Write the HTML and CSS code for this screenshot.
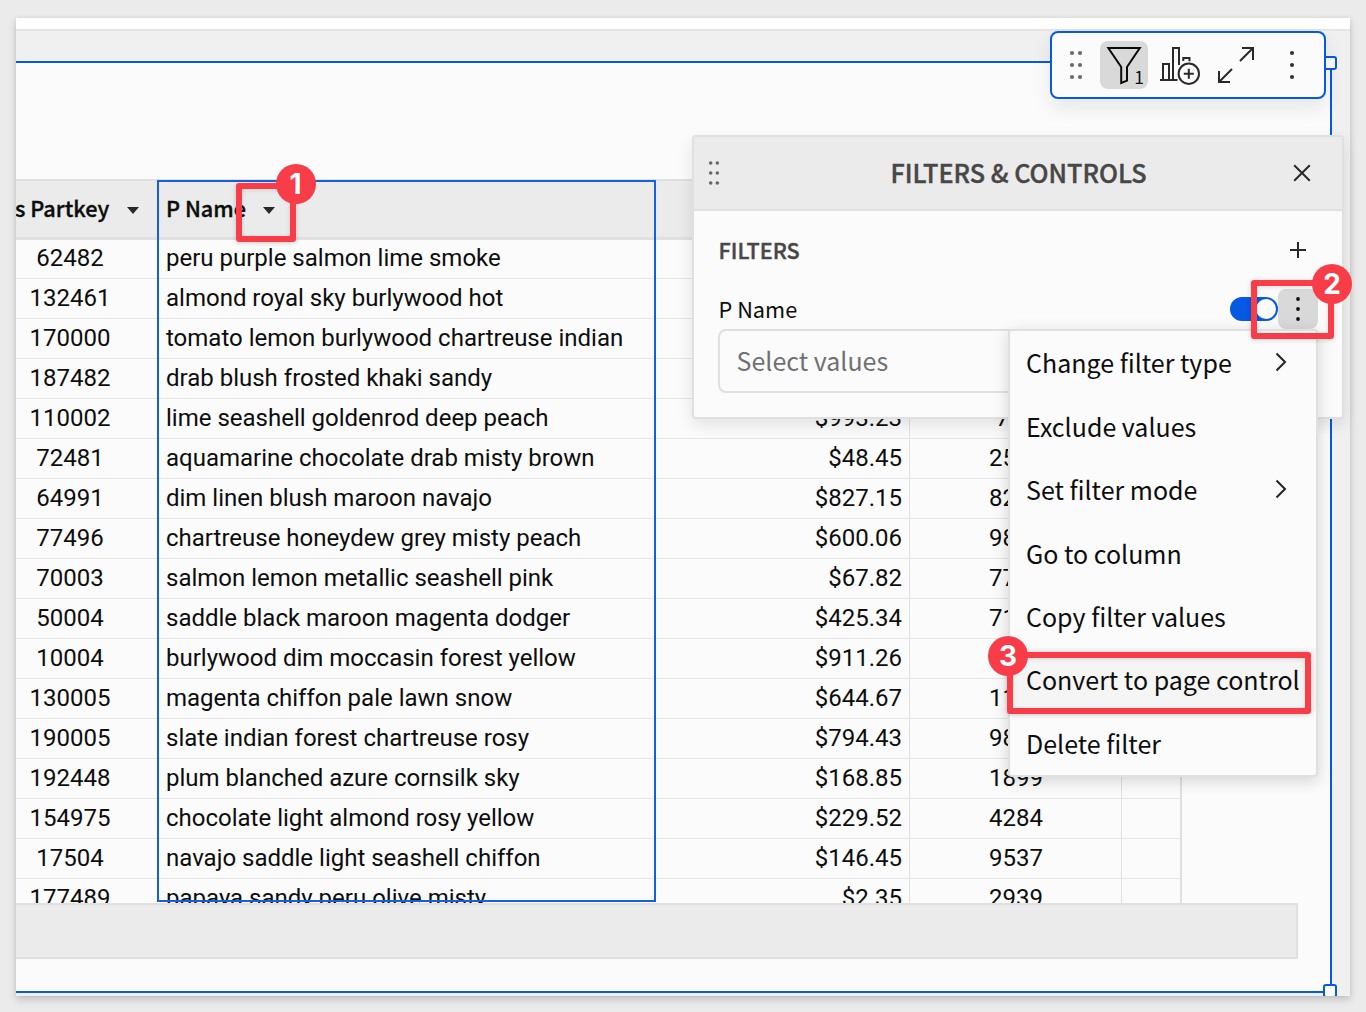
FILE: index.html
```html
<!DOCTYPE html>
<html lang="en">
<head>
<meta charset="utf-8">
<title>Filters &amp; Controls</title>
<link rel="stylesheet" href="styles.css">
</head>
<body>
<main class="window">
  <div class="topbar"></div>
  <section class="canvas">
    <div class="element">
      <div class="grid">
        <div class="row head">
          <div class="cell key"><span>s Partkey</span><i class="caret"></i></div>
          <div class="cell name"><span>P Name</span><i class="caret"></i></div>
          <div class="cell price"></div><div class="cell qty"></div><div class="cell rest"></div>
        </div>
        <div class="row"><div class="cell key">62482</div><div class="cell name">peru purple salmon lime smoke</div><div class="cell price"></div><div class="cell qty"></div><div class="cell rest"></div></div>
        <div class="row"><div class="cell key">132461</div><div class="cell name">almond royal sky burlywood hot</div><div class="cell price"></div><div class="cell qty"></div><div class="cell rest"></div></div>
        <div class="row"><div class="cell key">170000</div><div class="cell name">tomato lemon burlywood chartreuse indian</div><div class="cell price"></div><div class="cell qty"></div><div class="cell rest"></div></div>
        <div class="row"><div class="cell key">187482</div><div class="cell name">drab blush frosted khaki sandy</div><div class="cell price"></div><div class="cell qty"></div><div class="cell rest"></div></div>
        <div class="row"><div class="cell key">110002</div><div class="cell name">lime seashell goldenrod deep peach</div><div class="cell price">$993.23</div><div class="cell qty">761</div><div class="cell rest"></div></div>
        <div class="row"><div class="cell key">72481</div><div class="cell name">aquamarine chocolate drab misty brown</div><div class="cell price">$48.45</div><div class="cell qty">2510</div><div class="cell rest"></div></div>
        <div class="row"><div class="cell key">64991</div><div class="cell name">dim linen blush maroon navajo</div><div class="cell price">$827.15</div><div class="cell qty">8210</div><div class="cell rest"></div></div>
        <div class="row"><div class="cell key">77496</div><div class="cell name">chartreuse honeydew grey misty peach</div><div class="cell price">$600.06</div><div class="cell qty">9810</div><div class="cell rest"></div></div>
        <div class="row"><div class="cell key">70003</div><div class="cell name">salmon lemon metallic seashell pink</div><div class="cell price">$67.82</div><div class="cell qty">7710</div><div class="cell rest"></div></div>
        <div class="row"><div class="cell key">50004</div><div class="cell name">saddle black maroon magenta dodger</div><div class="cell price">$425.34</div><div class="cell qty">7110</div><div class="cell rest"></div></div>
        <div class="row"><div class="cell key">10004</div><div class="cell name">burlywood dim moccasin forest yellow</div><div class="cell price">$911.26</div><div class="cell qty"></div><div class="cell rest"></div></div>
        <div class="row"><div class="cell key">130005</div><div class="cell name">magenta chiffon pale lawn snow</div><div class="cell price">$644.67</div><div class="cell qty">1110</div><div class="cell rest"></div></div>
        <div class="row"><div class="cell key">190005</div><div class="cell name">slate indian forest chartreuse rosy</div><div class="cell price">$794.43</div><div class="cell qty">9810</div><div class="cell rest"></div></div>
        <div class="row"><div class="cell key">192448</div><div class="cell name">plum blanched azure cornsilk sky</div><div class="cell price">$168.85</div><div class="cell qty">1899</div><div class="cell rest"></div></div>
        <div class="row"><div class="cell key">154975</div><div class="cell name">chocolate light almond rosy yellow</div><div class="cell price">$229.52</div><div class="cell qty">4284</div><div class="cell rest"></div></div>
        <div class="row"><div class="cell key">17504</div><div class="cell name">navajo saddle light seashell chiffon</div><div class="cell price">$146.45</div><div class="cell qty">9537</div><div class="cell rest"></div></div>
        <div class="row"><div class="cell key">177489</div><div class="cell name">papaya sandy peru olive misty</div><div class="cell price">$2.35</div><div class="cell qty">2939</div><div class="cell rest"></div></div>
        <div class="column-selection"></div>
      </div>
      <div class="footer"></div>
    </div>
    <i class="handle top"></i>
    <i class="handle bottom"></i>
  </section>
</main>

<div class="toolbar">
  <svg class="icon" width="48" height="48" viewBox="0 0 48 48" fill="#6b6b6b"><circle cx="20" cy="12" r="2.1"/><circle cx="28" cy="12" r="2.1"/><circle cx="20" cy="24" r="2.1"/><circle cx="28" cy="24" r="2.1"/><circle cx="20" cy="36" r="2.1"/><circle cx="28" cy="36" r="2.1"/></svg>
  <button class="tool active"><svg width="48" height="48" viewBox="0 0 48 48" fill="none" stroke="#0a0a0a" stroke-width="2"><path d="M8.3 7H39.8L27 26V39.6L21.2 42V26Z"/></svg><span class="count">1</span></button>
  <svg class="icon chart" width="48" height="48" viewBox="0 0 48 48" fill="none" stroke="#292929" stroke-width="2"><path d="M4 39H21.5M7 39V23H13V39M17 39V7H23V24M27.3 20V17H33.5V20.3"/><circle cx="32.8" cy="32.7" r="10.2"/><path d="M27.8 32.7H37.8M32.8 27.7V37.7"/></svg>
  <svg class="icon" width="48" height="48" viewBox="0 0 48 48" fill="none" stroke="#292929" stroke-width="2"><path d="M30 7H41V19M40.5 7.5L28 20M7 30V41H18M7.5 40.5L20 28"/></svg>
  <svg class="icon more" width="48" height="48" viewBox="0 0 48 48" fill="#333"><circle cx="24" cy="12" r="2.1"/><circle cx="24" cy="24" r="2.1"/><circle cx="24" cy="36" r="2.1"/></svg>
</div>

<aside class="panel">
  <header class="panel-head">
    <svg width="12" height="26" viewBox="0 0 12 26" fill="#666"><circle cx="2.7" cy="3" r="1.8"/><circle cx="9.3" cy="3" r="1.8"/><circle cx="2.7" cy="13" r="1.8"/><circle cx="9.3" cy="13" r="1.8"/><circle cx="2.7" cy="23" r="1.8"/><circle cx="9.3" cy="23" r="1.8"/></svg>
    <h2>FILTERS &amp; CONTROLS</h2>
    <svg width="18" height="18" viewBox="0 0 18 18" fill="none" stroke="#292929" stroke-width="2"><path d="M1.2 1.2L16.8 16.8M16.8 1.2L1.2 16.8"/></svg>
  </header>
  <div class="panel-body">
    <div class="line section"><h3>FILTERS</h3><svg width="16" height="16" viewBox="0 0 16 16" fill="none" stroke="#292929" stroke-width="2"><path d="M0 8H16M8 0V16"/></svg></div>
    <div class="line filter"><span class="label">P Name</span><span class="toggle"><i></i></span><button class="kebab"><svg width="40" height="40" viewBox="0 0 40 40" fill="#111"><circle cx="20" cy="10" r="1.9"/><circle cx="20" cy="20" r="1.9"/><circle cx="20" cy="30" r="1.9"/></svg></button></div>
    <div class="select">Select values</div>
  </div>
</aside>

<ul class="menu">
  <li>Change filter type <svg width="12" height="20" viewBox="0 0 12 20" fill="none" stroke="#222" stroke-width="2"><path d="M1.5 1.5L10 10L1.5 18.5"/></svg></li>
  <li>Exclude values</li>
  <li>Set filter mode <svg width="12" height="20" viewBox="0 0 12 20" fill="none" stroke="#222" stroke-width="2"><path d="M1.5 1.5L10 10L1.5 18.5"/></svg></li>
  <li>Go to column</li>
  <li>Copy filter values</li>
  <li class="hover">Convert to page control</li>
  <li>Delete filter</li>
</ul>

<div class="mark one"><b>1</b></div>
<div class="mark two"><b>2</b></div>
<div class="mark three"><b>3</b></div>
</body>
</html>
```
FILE: styles.css
```css
* { box-sizing: border-box; }
body {
  margin: 0;
  width: 1366px;
  height: 1012px;
  padding: 18px 16px 16px;
  overflow: hidden;
  position: relative;
  background: #ebebeb;
  color: #0d0d0d;
  font-family: "Noto Sans CJK SC", sans-serif;
}
h2, h3, ul { margin: 0; padding: 0; }
button { border: 0; padding: 0; }
svg { display: block; flex: none; }

.window {
  display: flex;
  flex-direction: column;
  height: 978px;
  overflow: hidden;
  background: #f0f0f0;
  box-shadow: 0 4px 8px rgba(0, 0, 0, .16), 0 0 4px rgba(0, 0, 0, .08);
}
.topbar { height: 13px; flex: none; background: #fff; border-bottom: 2px solid #e5e5e5; }
.canvas { position: relative; flex: 1; padding-top: 30px; }
.element {
  width: 1316px;
  height: 932px;
  padding-top: 116px;
  background: #fbfbfb;
  border: 2px solid #0659e2;
  border-left: 0;
}
.handle {
  position: absolute;
  left: 1307px;
  width: 14px;
  height: 14px;
  border: 2px solid #0659e2;
  border-radius: 3px;
  background: #fbfbfb;
}
.handle.top { top: 25px; }
.handle.bottom { top: 953px; }

.grid {
  position: relative;
  width: 1166px;
  height: 724px;
  overflow: hidden;
  border-right: 2px solid #e0e0e0;
  font: 24px/39px Roboto, sans-serif;
}
.row { display: flex; height: 40px; margin-left: -33px; border-bottom: 1px solid #e5e5e5; white-space: nowrap; }
.cell { flex: none; }
.key { width: 174px; text-align: center; }
.name { width: 499px; padding-left: 9px; }
.price { width: 254px; padding-right: 7px; text-align: right; border-right: 1px solid #e0e0e0; }
.qty { width: 212px; padding-left: 1px; text-align: center; border-right: 1px solid #e0e0e0; }
.rest { width: 60px; }
.head {
  position: relative;
  height: 60px;
  background: #ebebeb;
  border-top: 2px solid #e0e0e0;
  border-bottom: 2px solid #e0e0e0;
  box-shadow: 0 1px #e0e0e0;
  font: 500 21.7px/54px "Noto Sans CJK SC", sans-serif;
  -webkit-text-stroke: .35px;
}
.head .cell { display: flex; align-items: center; border: 0; }
.head .cell span { height: 56px; line-height: 53px; }
.head .key { padding-left: 32px; justify-content: space-between; padding-right: 18px; }
.head .name { gap: 17px; }
.caret { margin-top: 2px; border: 6.5px solid transparent; border-top: 7px solid #292929; border-bottom: 0; }
.column-selection {
  position: absolute;
  left: 141px;
  top: 1px;
  width: 499px;
  height: 722px;
  border: 2px solid #1560e2;
}
.footer { width: 1282px; height: 56px; background: #ebebeb; border: 2px solid #e0e0e0; border-left: 0; }

.toolbar {
  position: absolute;
  left: 1050px;
  top: 31px;
  width: 276px;
  height: 68px;
  display: flex;
  align-items: center;
  background: #fbfbfb;
  border: 2px solid #0659e2;
  border-radius: 8px;
  box-shadow: 0 8px 20px rgba(0, 0, 0, .09);
}
.tool { position: relative; width: 48px; height: 48px; border-radius: 8px; background: #d9d9d9; }
.chart { margin: 0 8px; }
.more { margin-left: 8px; }
.count { position: absolute; right: 4px; bottom: 0; font: 17.5px/24px "Noto Sans CJK SC", sans-serif; color: #111; }

.panel {
  position: absolute;
  left: 692px;
  top: 135px;
  width: 652px;
  height: 284px;
  background: #fbfbfb;
  border: 2px solid #e0e0e0;
  border-radius: 4px;
  box-shadow: 0 6px 16px rgba(0, 0, 0, .1);
}
.panel-head {
  display: flex;
  align-items: center;
  justify-content: space-between;
  height: 74px;
  padding: 0 31px 0 14px;
  background: #ebebeb;
  border-bottom: 2px solid #e0e0e0;
}
h2, h3 { color: #474747; font-weight: 500; white-space: nowrap; -webkit-text-stroke: .4px; }
h2 { font-size: 25.2px; line-height: 38px; margin: -2px 0 0 24px; }
h3 { font-size: 21.6px; line-height: 32px; }
.panel-body { padding: 19px 24px 0; }
.line { display: flex; align-items: center; }
.section { height: 40px; justify-content: space-between; padding: 0 12px 0 .6px; }
.filter { height: 40px; margin-top: 19px; padding-left: .6px; font-size: 21.7px; }
.label { flex: 1; margin-top: -2px; }
.toggle { width: 48px; height: 24px; padding: 2px; border-radius: 12px; background: #0659e2; display: flex; justify-content: flex-end; }
.toggle i { width: 20px; height: 20px; border-radius: 50%; background: #fbfbfb; }
.kebab { width: 40px; height: 40px; border-radius: 8px; background: #d9d9d9; }
.select {
  height: 64px;
  padding-left: 16.6px;
  border: 2px solid #e0e0e0;
  border-radius: 8px;
  color: #707070;
  font-size: 25px;
  line-height: 58px;
}

.menu {
  position: absolute;
  left: 1008px;
  top: 329px;
  width: 310px;
  height: 448px;
  display: grid;
  grid-template-rows: repeat(7, 63.35px);
  list-style: none;
  background: #fbfbfb;
  border: 2px solid #e0e0e0;
  border-radius: 4px;
  box-shadow: 0 4px 16px rgba(0, 0, 0, .16);
  font-size: 25px;
}
.menu li { display: flex; align-items: center; justify-content: space-between; padding: 0 29px .4px 16px; white-space: nowrap; }
.menu .hover { background: #f5f5f5; padding-right: 0; }

.mark { position: absolute; border: 6px solid #f83d48; border-radius: 3px; box-shadow: 0 1px 5px rgba(0, 0, 0, .18), inset 0 1px 5px rgba(0, 0, 0, .12); }
.mark b {
  position: absolute;
  width: 40px;
  height: 40px;
  border-radius: 50%;
  background: #f83d48;
  color: #fff;
  font: 700 28px/40px Inter, sans-serif;
  text-align: center;
}
.one { left: 236px; top: 183px; width: 60px; height: 59px; }
.one b { left: 33.6px; top: -25px; }
.two { left: 1251px; top: 280px; width: 83px; height: 59px; }
.two b { left: 55px; top: -22px; }
.three { left: 1007px; top: 652px; width: 304px; height: 62px; }
.three b { left: -25px; top: -22px; }
```
